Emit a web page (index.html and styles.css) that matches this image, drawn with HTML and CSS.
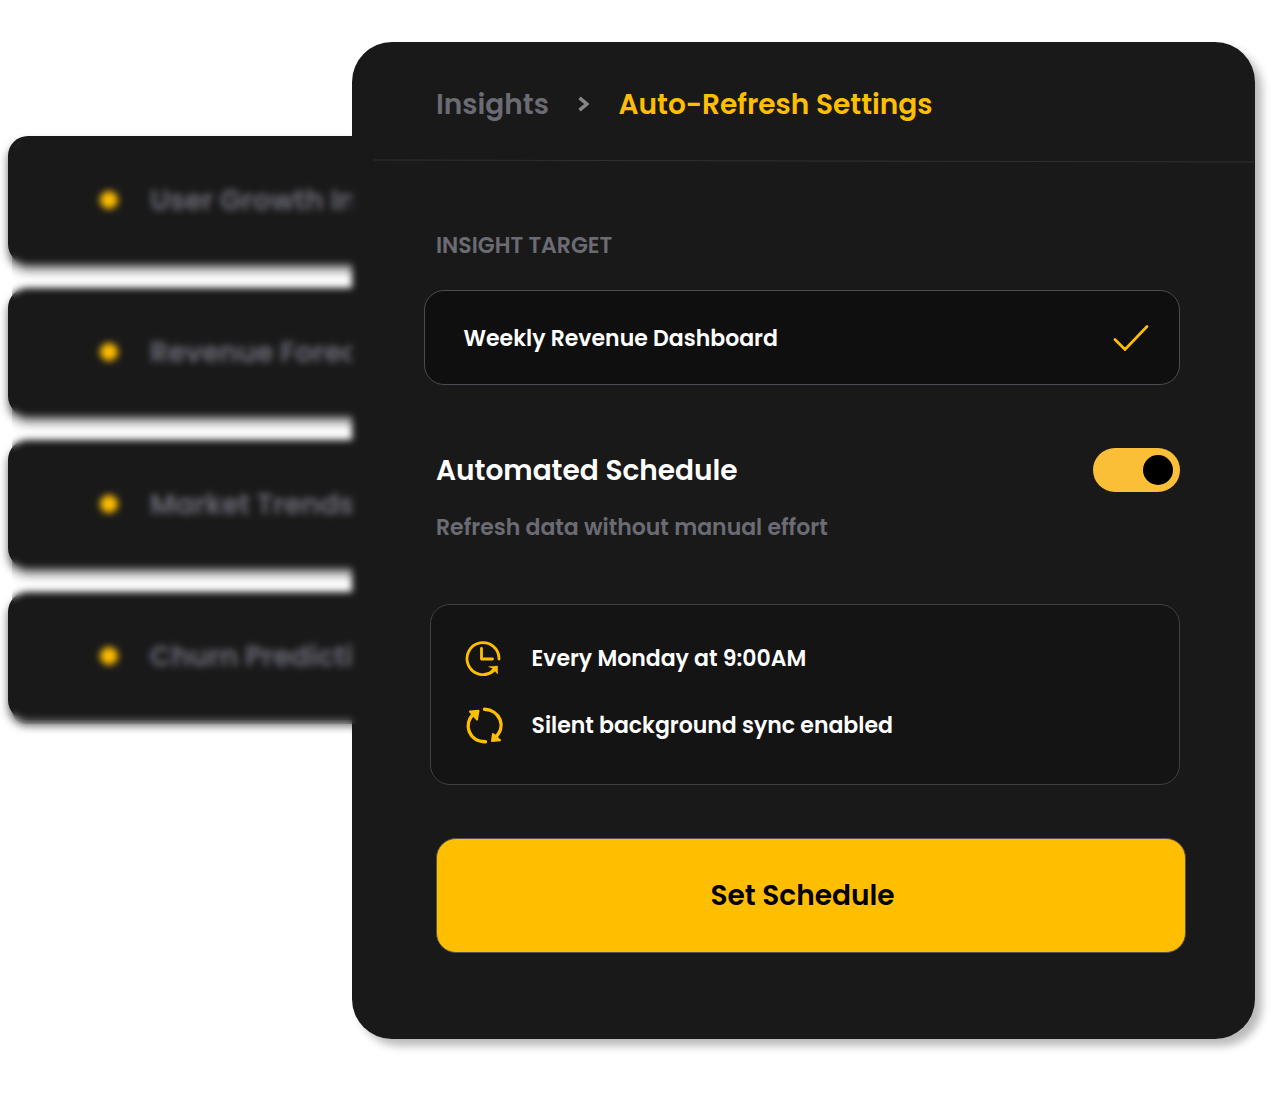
FILE: index.html
```
<!DOCTYPE html>
<html lang="en">
<head>
<meta charset="utf-8">
<title>Auto-Refresh Settings</title>
<link rel="stylesheet" href="styles.css">
</head>
<body>
<main class="stage">
  <aside class="insights">
    <div class="insight"><span class="dot"></span><span class="insight-name">User Growth Insights</span></div>
    <div class="insight"><span class="dot"></span><span class="insight-name">Revenue Forecast</span></div>
    <div class="insight"><span class="dot"></span><span class="insight-name">Market Trends</span></div>
    <div class="insight"><span class="dot"></span><span class="insight-name">Churn Prediction</span></div>
  </aside>
  <section class="panel">
    <header class="crumbs">
      <span class="crumb">Insights</span>
      <svg class="chevron" viewBox="0 0 12 16"><path d="M2.500 1.800 9.800 8 2.500 14.200"/></svg>
      <span class="crumb-current">Auto-Refresh Settings</span>
      <svg class="divider" viewBox="0 0 881 4" preserveAspectRatio="none"><path d="M0 1 881 3"/></svg>
    </header>
    <div class="content">
      <h2 class="label">INSIGHT TARGET</h2>
      <div class="target">
        <span class="target-name">Weekly Revenue Dashboard</span>
        <svg class="check" viewBox="0 0 36 26"><path d="M2 14.5 12 24.5 34 1.5"/></svg>
      </div>
      <div class="schedule">
        <h3 class="schedule-title">Automated Schedule</h3>
        <span class="toggle"><span class="knob"></span></span>
      </div>
      <p class="hint">Refresh data without manual effort</p>
      <div class="details">
        <div class="detail">
          <svg class="icon" viewBox="0 0 40 40"><path class="thin" d="M35 21A16 16 0 1 0 28.500 33.500M17.500 10.500V21H28.500"/><path class="solid" d="M25 28.700 33.500 28 33.600 36 31 33.300 28 35 26.500 33 28.800 30.500Z"/></svg>
          <span class="detail-text">Every Monday at 9:00AM</span>
        </div>
        <div class="detail">
          <svg class="icon" viewBox="0 0 40 40"><path class="thick" d="M21.500 36.800C5 37-1.500 19 10 8.500M20.500 4.300C36 5 43 22 31 32.500"/><path class="head" d="M6 6.500 14.500 5.800 13 14.500ZM29 29 28 36 36 35.300Z"/></svg>
          <span class="detail-text">Silent background sync enabled</span>
        </div>
      </div>
      <button class="submit" type="button">Set Schedule</button>
    </div>
  </section>
  <div class="frost"></div>
</main>
</body>
</html>
```
FILE: styles.css
```
* { box-sizing: border-box; }
body {
  margin: 0;
  background: #fff;
  font-family: Poppins, Inter, "Liberation Sans", sans-serif;
  font-weight: 600;
}
h2, h3, p { margin: 0; font-weight: 600; }
svg { display: block; fill: none; flex: none; }
.stage {
  position: relative;
  display: flex;
  align-items: flex-start;
  width: 1271px;
  height: 1096px;
  padding: 42px 16px 0 8px;
  overflow: hidden;
}
.insights {
  display: flex;
  flex-direction: column;
  gap: 24px;
  width: 344px;
  margin-top: 94px;
}
.insight {
  display: flex;
  align-items: center;
  gap: 32px;
  width: 370px;
  height: 128px;
  padding-left: 92px;
  border-radius: 20px;
  background: #191919;
  box-shadow: 0 6px 8px rgba(0, 0, 0, .58);
}
.dot {
  flex: none;
  width: 18px;
  height: 18px;
  border-radius: 50%;
  background: #ffbf00;
}
.insight-name {
  padding-top: 1px;
  color: #6b6b76;
  font-size: 28px;
  white-space: nowrap;
}
.panel {
  position: relative;
  width: 903px;
  height: 997px;
  border-radius: 40px;
  background: #191919;
  box-shadow: 7px 7px 8px rgba(0, 0, 0, .27);
}
.crumbs {
  position: relative;
  display: flex;
  align-items: center;
  height: 119px;
  padding: 6px 0 0 84px;
  font-size: 28px;
  white-space: nowrap;
}
.crumb { width: 141px; color: #6b6b73; }
.chevron { width: 12px; height: 16px; margin-top: -1px; stroke: #86868a; stroke-width: 3.500; }
.crumb-current { margin-left: 29.500px; color: #ffbf00; }
.divider {
  position: absolute;
  right: 1px;
  bottom: -2px;
  width: 881px;
  height: 4px;
  stroke: #303033;
  stroke-width: 1;
}
.content { padding: 68px 69px 0 72px; }
.label {
  padding-left: 12px;
  color: #6b6b73;
  font-size: 22px;
  line-height: 34px;
}
.target {
  display: flex;
  align-items: center;
  justify-content: space-between;
  width: 756px;
  height: 95px;
  margin-top: 27px;
  padding: 0 30px 0 38.500px;
  border: 1px solid #4b4b53;
  border-radius: 20px;
  background: #0f0f0f;
}
.target-name { padding-top: 2px; color: #fff; font-size: 22px; white-space: nowrap; }
.check { width: 36px; height: 26px; stroke: #ffbf00; stroke-width: 2.700; stroke-linecap: round; }
.schedule {
  display: flex;
  align-items: center;
  justify-content: space-between;
  width: 756px;
  height: 44px;
  margin-top: 63px;
  padding-left: 12px;
}
.schedule-title { padding-top: 2px; color: #fff; font-size: 28px; white-space: nowrap; }
.toggle {
  display: flex;
  align-items: center;
  justify-content: flex-end;
  width: 87px;
  height: 44px;
  padding-right: 7px;
  border-radius: 22px;
  background: #fbbf37;
}
.knob { width: 30px; height: 30px; border-radius: 50%; background: #000; }
.hint {
  margin-top: 19px;
  padding-left: 12px;
  color: #6b6b73;
  font-size: 22px;
  line-height: 34px;
  white-space: nowrap;
}
.details {
  display: flex;
  flex-direction: column;
  gap: 27px;
  width: 750px;
  height: 181px;
  margin: 59px 0 0 6px;
  padding: 33px 0 0 33px;
  border: 1px solid #414143;
  border-radius: 20px;
  background: #141414;
}
.detail { display: flex; align-items: center; gap: 27.500px; height: 40px; }
.icon { width: 40px; height: 40px; stroke: #ffbf00; stroke-linecap: round; stroke-linejoin: round; }
.thin { stroke-width: 2.800; }
.thick { stroke-width: 3.400; }
.solid, .head { fill: #ffbf00; }
.solid { stroke-width: .5; }
.head { stroke-width: 2; }
.detail-text { color: #fff; font-size: 22px; white-space: nowrap; }
.submit {
  display: block;
  width: 750px;
  height: 115px;
  margin: 52.500px 0 0 12px;
  padding: 1px 17px 0 0;
  border: 1px solid #55534e;
  border-radius: 20px;
  background: #ffbf00;
  color: #000;
  font: inherit;
  font-size: 28px;
}
/* Frosted layer that softens the list behind the panel */
.frost {
  position: absolute;
  left: 12px;
  top: 140px;
  width: 362px;
  height: 584px;
  border-radius: 14px 0 0 14px;
  backdrop-filter: blur(3.700px);
}
```
